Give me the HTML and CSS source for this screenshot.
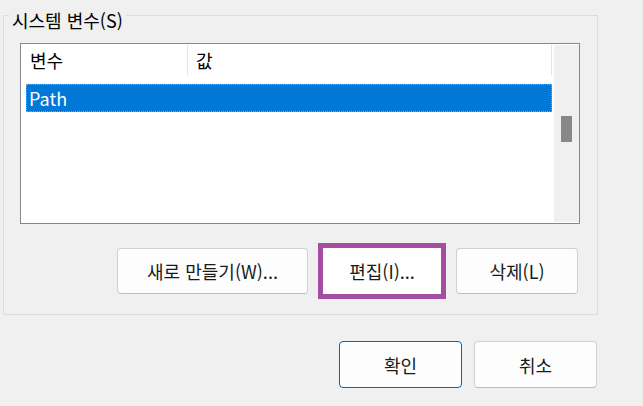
FILE: index.html
```html
<!DOCTYPE html>
<html lang="ko">
<head>
  <meta charset="UTF-8">
  <title>환경 변수</title>
  <link rel="stylesheet" href="styles.css">
</head>
<body>
  <fieldset class="group">
    <legend>시스템 변수(S)</legend>
    <div class="list">
      <div class="list-body">
        <div class="list-header">
          <div class="col col-name">변수</div>
          <div class="col col-value">값</div>
          <div class="col col-rest"></div>
        </div>
        <div class="row selected">Path</div>
      </div>
      <div class="scrollbar"><div class="thumb"></div></div>
    </div>
    <div class="actions">
      <button type="button" class="btn btn-new">새로 만들기(W)...</button>
      <button type="button" class="btn btn-edit">편집(I)...</button>
      <button type="button" class="btn btn-delete">삭제(L)</button>
    </div>
  </fieldset>
  <div class="footer">
    <button type="button" class="btn btn-ok">확인</button>
    <button type="button" class="btn btn-cancel">취소</button>
  </div>
</body>
</html>
```

FILE: styles.css
```css
body { margin: 0; background: #f0f0f0; color: #000; font-family: "Noto Sans CJK KR", "Noto Sans", sans-serif; font-size: 18px; width: 643px; height: 406px; overflow: hidden; }
.group { box-sizing: border-box; width: 595px; margin: 0 0 0 3px; padding: 0 17px 20px 16px; border: 1px solid #dcdcdc; min-width: 0; }
.group legend { margin-left: -11px; padding: 10px 3px 0; line-height: 20px; }
.list { display: flex; width: 560px; height: 181px; margin-top: 13px; box-sizing: border-box; border: 1px solid #828790; background: #fff; }
.list-body { flex: 1; background: #fff; }
.list-header { display: flex; height: 32px; }
.col { height: 30px; margin-top: 1px; line-height: 30px; }
.col-name { width: 157px; padding-left: 9px; border-right: 1px solid #e5e5e5; }
.col-value { width: 355px; padding-left: 8px; border-right: 1px solid #e5e5e5; }
.col-rest { flex: 1; }
.row { height: 26px; line-height: 26px; margin: 8px 0 0 5px; width: 522px; padding-left: 2px; }
.row.selected { background: #0078d7; color: #fff; border: 1px dotted #e8892a; }
.scrollbar { width: 25px; margin: 1px 0; background: #f0f0f0; }
.thumb { width: 11px; height: 26px; margin: 71px 0 0 7px; background: #888; }
.actions { display: flex; justify-content: flex-end; gap: 15px; margin-top: 24px; padding-right: 2px; }
.btn { height: 46px; box-sizing: border-box; border: 1px solid #d0d0d0; border-bottom-color: #bdbdbd; border-radius: 4px; background: #fdfdfd; color: #1a1a1a; font: inherit; line-height: 22px; padding: 0; }
.btn-new { width: 191px; }
.btn-edit { width: 118px; border: none; border-radius: 0; background: #fff; outline: 5px solid #a34ea3; }
.btn-delete { width: 122px; }
.footer { display: flex; justify-content: flex-end; gap: 12px; margin-top: 26px; padding-right: 46px; }
.btn-ok, .btn-cancel { width: 123px; height: 47px; }
.btn-ok { border: 1px solid #0067c0; }
```
